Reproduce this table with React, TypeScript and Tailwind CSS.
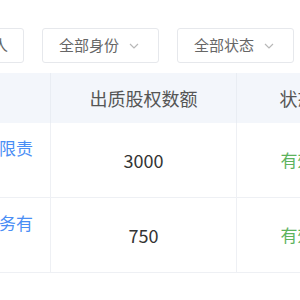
import React from 'react';

const font = { fontFamily: '"Noto Sans CJK SC", "Noto Sans", sans-serif' };

function Chevron() {
    return (
        <svg width="10" height="6" viewBox="0 0 10 6" className="ml-[10px]">
            <polyline points="1,1 5,5 9,1" fill="none" stroke="#b8b8b8" strokeWidth="1.2" />
        </svg>
    );
}

function FilterBox({ label, arrow = true }: { label: string; arrow?: boolean }) {
    return (
        <div className={`flex h-[35px] w-[117px] shrink-0 items-center rounded-[3px] border border-[#e6e8ec] bg-white text-[15px] text-[#666] ${arrow ? 'pl-[16px]' : 'pl-[10px]'}`}>
            <span className="whitespace-nowrap">{label}</span>
            {arrow && <Chevron />}
        </div>
    );
}

const rows = [
    { name: '宏达投资有限责任公司', amount: '3000', status: '有效' },
    { name: '上海鑫源商务有限公司', amount: '750', status: '有效' },
];

export default function App() {
    return (
        <div className="h-[300px] w-[300px] overflow-hidden bg-white" style={font}>
            <div className="ml-[-102px] w-[460px]">
                <div className="ml-[9px] flex gap-[18px] pt-[28px]">
                    <FilterBox label="请输入出质人" arrow={false} />
                    <FilterBox label="全部身份" />
                    <FilterBox label="全部状态" />
                </div>

                <div className="mt-[10px] grid grid-cols-[153px_186px_121px]">
                    <div className="flex h-[50px] items-center border-r border-[#e9edf3] bg-[#f3f6fb] pl-[16px] text-[18px] text-[#555]">出质人</div>
                    <div className="flex h-[50px] items-center justify-center border-r border-[#e9edf3] bg-[#f3f6fb] text-[18px] text-[#555]">出质股权数额</div>
                    <div className="flex h-[50px] items-center justify-center bg-[#f3f6fb] text-[18px] text-[#555]">状态</div>

                    {rows.map((r) => (
                        <React.Fragment key={r.name}>
                            <div className="flex h-[75px] items-center border-b border-r border-[#eef0f4] pl-[16px]">
                                <span className="w-[120px] text-[17px] leading-[24px] text-[#4a8ef5]">{r.name}</span>
                            </div>
                            <div className="flex h-[75px] items-center justify-center border-b border-r border-[#eef0f4] text-[18px] text-[#333]">
                                {r.amount}
                            </div>
                            <div className="flex h-[75px] items-center justify-center border-b border-[#eef0f4] text-[17px] text-[#5db35d]">
                                {r.status}
                            </div>
                        </React.Fragment>
                    ))}
                </div>
            </div>
        </div>
    );
}
